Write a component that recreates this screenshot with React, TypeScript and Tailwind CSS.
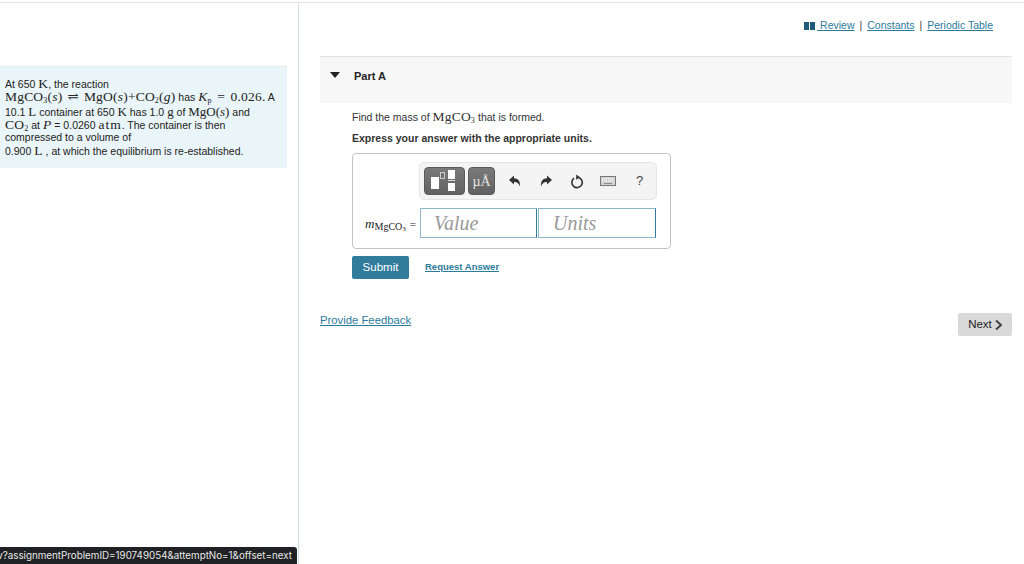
import React from "react";

const serif = "font-['Liberation_Serif','DejaVu_Serif',serif]";
const math = "font-['Liberation_Serif','DejaVu_Serif',serif] text-[13.5px] tracking-[0.2px]";
const mathTight = "font-['Liberation_Serif','DejaVu_Serif',serif] text-[13px]";

function ReviewBar() {
  return (
    <div className="flex items-center justify-end h-[44px] pr-[31px] pt-[1px] text-[10.5px] text-[#2c7a9c]">
      <svg width="11" height="8" viewBox="0 0 11 8" className="mr-[2px]">
        <rect x="0" y="0" width="5" height="8" fill="#1f5a78" />
        <rect x="6" y="0" width="5" height="8" fill="#1f5a78" />
      </svg>
      <a className="underline whitespace-pre"> Review</a>
      <span className="mx-[5px] text-[#444]">|</span>
      <a className="underline">Constants</a>
      <span className="mx-[5px] text-[#444]">|</span>
      <a className="underline">Periodic Table</a>
    </div>
  );
}

function Toolbar() {
  return (
    <div className="flex items-center h-[38px] w-[238px] ml-[66px] mt-[8px] rounded-[5px] border border-[#e6e6e6] bg-[#f4f4f4] pl-[4px]">
      <div className="w-[41px] h-[28px] rounded-[4px] bg-gradient-to-b from-[#7a7a7a] to-[#626262] border border-[#5a5a5a] overflow-hidden">
        <svg width="41" height="28" viewBox="0 0 41 28" className="-ml-px -mt-px">
          <rect x="7" y="10" width="8" height="12" fill="#fff" />
          <rect x="16.5" y="5.5" width="4" height="6" fill="none" stroke="#ccc" strokeWidth="1" />
          <rect x="24" y="3" width="7" height="9" fill="#fff" />
          <rect x="24" y="13" width="7" height="1" fill="#ddd" />
          <rect x="24" y="16" width="7" height="8" fill="#fff" />
        </svg>
      </div>
      <div className={`flex items-center justify-center w-[27px] h-[28px] ml-[3px] rounded-[4px] bg-gradient-to-b from-[#7a7a7a] to-[#626262] border border-[#5a5a5a] text-[#e4e4e4] text-[14px] ${serif}`}>
        <span className="pt-[1px]">µÅ</span>
      </div>
      <svg width="14" height="14" viewBox="0 0 14 14" className="ml-[13px]">
        <path d="M1 6 L6 1.5 V4.2 C10 4.2 12.5 7 12 12.5 C11 9.5 9.5 8 6 8 V10.5 Z" fill="#333" />
      </svg>
      <svg width="14" height="14" viewBox="0 0 14 14" className="ml-[17px]">
        <path d="M13 6 L8 1.5 V4.2 C4 4.2 1.5 7 2 12.5 C3 9.5 4.5 8 8 8 V10.5 Z" fill="#333" />
      </svg>
      <svg width="14" height="15" viewBox="0 0 14 15" className="ml-[17px]">
        <path d="M8.5 3.4 A5.2 5.2 0 1 1 4 4.2" fill="none" stroke="#333" strokeWidth="1.6" />
        <path d="M6.2 0.5 L10 3.3 L6.2 5.8 Z" fill="#333" />
      </svg>
      <svg width="16" height="10" viewBox="0 0 16 10" className="ml-[16px]">
        <rect x="0.5" y="0.5" width="15" height="9" fill="#d4d4d4" stroke="#777" />
        <path d="M2 3 H14 M2 5 H14" stroke="#fff" strokeWidth="1" strokeDasharray="1 1" />
        <rect x="4" y="7" width="8" height="1" fill="#888" />
      </svg>
      <span className="ml-[20px] text-[13px] text-[#444] font-['Liberation_Sans',sans-serif]">?</span>
    </div>
  );
}

function AnswerBox() {
  return (
    <div className="w-[319px] h-[96px] ml-[53px] mt-[7px] rounded-[4px] border border-[#c4c4c4]">
      <Toolbar />
      <div className="flex items-center h-[30px] mt-[8px]">
        <div className={`flex items-baseline justify-end w-[63px] pt-[1px] text-[#222] ${serif}`}>
          <i className="text-[13px]">m</i>
          <span className="text-[10px] translate-y-[2px]">MgCO</span>
          <span className="text-[7px] translate-y-[3px]">3</span>
          <span className="text-[11px] ml-[4px]">=</span>
        </div>
        <div className={`w-[117px] h-[30px] ml-[4px] pl-[13px] border border-[#2f7c9e] border-b-[#8db6c9] border-l-[#8db6c9] border-t-[#8db6c9] text-[20px] leading-[28px] italic text-[#999] ${serif}`}>Value</div>
        <div className={`w-[118px] h-[30px] ml-[1px] pl-[14px] border border-[#2f7c9e] border-b-[#8db6c9] border-l-[#8db6c9] border-t-[#8db6c9] text-[20px] leading-[28px] italic text-[#999] ${serif}`}>Units</div>
      </div>
    </div>
  );
}

export default function App() {
  return (
    <div className="relative h-[564px] w-[1024px] overflow-hidden bg-white font-['Liberation_Sans',sans-serif] text-[#222]">
      <div className="mt-[2px] flex h-[562px] border-t border-[#e3e3e3]">
        {/* left problem statement */}
        <div className="w-[299px] shrink-0 border-r border-[#cfdfe8] pt-[63px]">
          <div className="w-[287px] h-[102px] bg-[#e9f5f8] border-t border-[#e2ecef] pl-[5px] pt-[10px] text-[10.5px] leading-[13px] text-[#222]">
            <div className="h-[13px]">At 650 <span className={math}>K</span>, the reaction</div>
            <div className="h-[15px] whitespace-nowrap">
              <span className={math}>MgCO<sub className="text-[8px]">3</sub>(<i>s</i>)<span className="mx-[5px]">⇌</span>MgO(<i>s</i>)+CO<sub className="text-[8px]">2</sub>(<i>g</i>)</span> has <span className={math}><i>K</i><sub className="text-[8px]">p</sub><span className="mx-[2px]"> = </span>0.026.</span> A
            </div>
            <div className="h-[13px]">10.1 <span className={mathTight}>L</span> container at 650 <span className={mathTight}>K</span> has 1.0 <span className={mathTight}>g</span> of <span className={mathTight}>MgO(<i>s</i>)</span> and</div>
            <div className="h-[13px]"><span className={math}>CO<sub className="text-[8px]">2</sub></span> at <span className={math}><i>P</i></span> = 0.0260 <span className={`${math} tracking-[1px]`}>atm</span>. The container is then</div>
            <div className="h-[13px]">compressed to a volume of</div>
            <div className="h-[13px]">0.900 <span className={math}>L</span> , at which the equilibrium is re-established.</div>
          </div>
        </div>

        {/* right question area */}
        <div className="flex-1 min-w-0">
          <ReviewBar />
          <div className="ml-[21px] mr-[12px] mt-[9px] h-[47px] bg-[#f7f7f7] border-t border-[#e3e3e3] flex pt-[12px]">
            <svg width="10" height="6" viewBox="0 0 10 6" className="ml-[10px] mt-[3px]">
              <path d="M0 0 H10 L5 6 Z" fill="#222" />
            </svg>
            <span className="ml-[14px] text-[11px] leading-[14px] font-bold text-[#222]">Part A</span>
          </div>
          <div className="ml-[53px] mt-[6px] h-[15px] text-[10.5px] leading-[15px] text-[#333]">
            Find the mass of <span className={math}>MgCO<sub className="text-[8px]">3</sub></span> that is formed.
          </div>
          <div className="ml-[53px] mt-[7px] h-[15px] text-[10.5px] leading-[15px] font-bold text-[#333]">Express your answer with the appropriate units.</div>
          <AnswerBox />
          <div className="flex items-center ml-[53px] mt-[7px]">
            <button className="w-[57px] h-[23px] rounded-[2px] bg-[#317b9b] text-white text-[11.5px]">Submit</button>
            <a className="ml-[16px] text-[9.5px] font-bold underline text-[#2c7a9c]">Request Answer</a>
          </div>
          <div className="flex items-start justify-between ml-[21px] mr-[12px] mt-[34px]">
            <a className="text-[11.3px] leading-[14px] underline text-[#2c7a9c]">Provide Feedback</a>
            <button className="flex items-center justify-center w-[54px] h-[23px] rounded-[2px] bg-[#d9d9d9] text-[11.5px] text-[#222]">
              Next
              <svg width="7" height="10" viewBox="0 0 7 10" className="ml-[3px]">
                <path d="M1 0.5 L6 5 L1 9.5" fill="none" stroke="#444" strokeWidth="2" />
              </svg>
            </button>
          </div>
        </div>
      </div>

      {/* status bar tooltip */}
      <div className="absolute bottom-0 left-0 flex justify-end w-[297px] h-[17px] pr-[5px] rounded-tr-[3px] bg-[#202124] text-[#e8e8e8] text-[9.8px] leading-[18px] whitespace-nowrap overflow-hidden font-['Inter',sans-serif]">
        v?assignmentProblemID=190749054&amp;attemptNo=1&amp;offset=next
      </div>
    </div>
  );
}
